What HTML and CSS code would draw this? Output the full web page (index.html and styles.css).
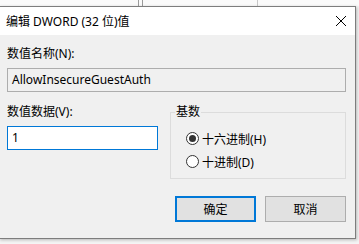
FILE: index.html
```html
<!DOCTYPE html>
<html lang="zh-CN">
<head>
<meta charset="utf-8">
<link rel="stylesheet" href="styles.css">
</head>
<body>
<div class="desk">
  <div class="behind-top">
    <span class="vline v1"></span>
    <span class="vline v2"></span>
    <span class="vline v3"></span>
  </div>
  <div class="dialog">
    <div class="titlebar">
      <span class="title">编辑 DWORD (32 位)值</span>
      <svg class="close" width="12" height="12" viewBox="0 0 12 12">
        <path d="M1 1 L11 11 M11 1 L1 11" stroke="#000" stroke-width="1" fill="none"/>
      </svg>
    </div>
    <div class="body">
      <div class="label first">数值名称(N):</div>
      <div class="field readonly">AllowInsecureGuestAuth</div>
      <div class="row">
        <div class="col-left">
          <div class="label">数值数据(V):</div>
          <div class="field value">1</div>
        </div>
        <fieldset class="group">
          <legend>基数</legend>
          <div class="radio"><span class="dot checked"></span><span>十六进制(H)</span></div>
          <div class="radio"><span class="dot"></span><span>十进制(D)</span></div>
        </fieldset>
      </div>
      <div class="buttons">
        <div class="btn default">确定</div>
        <div class="btn">取消</div>
      </div>
    </div>
  </div>
</div>
</body>
</html>
```
FILE: styles.css
```css
* { box-sizing: border-box; }
html, body { margin: 0; padding: 0; }
body {
  width: 359px;
  height: 244px;
  overflow: hidden;
  font-family: "Noto Sans", "Noto Sans CJK SC", sans-serif;
  font-size: 12px;
  color: #000;
}
.desk {
  position: relative;
  width: 359px;
  height: 244px;
  background: #f4f4f4;
  overflow: hidden;
}
.behind-top {
  height: 6px;
  background: #fafafa;
  position: relative;
}
.vline {
  position: absolute;
  top: 0;
  width: 1px;
  height: 6px;
  background: #9a9a9a;
}
.v1 { left: 138px; }
.v2 { left: 142px; }
.v3 { left: 257px; background: #c8c8c8; }
.dialog {
  position: absolute;
  left: -1px;
  top: 6px;
  width: 357px;
  height: 233px;
  border: 1px solid #7d7d7d;
  background: #f0f0f0;
  box-shadow: 1px 1px 3px rgba(0,0,0,0.25);
  display: flex;
  flex-direction: column;
}
.titlebar {
  height: 28px;
  background: #fff;
  display: flex;
  align-items: center;
  justify-content: space-between;
  padding: 0 8px 0 6px;
}
.title {
  font-size: 12px;
  line-height: 16px;
  margin-top: 1px;
}
.close { display: block; margin-top: -1px; }
.body {
  flex: 1;
  padding: 11px 9px 0 7px;
  display: flex;
  flex-direction: column;
}
.label {
  line-height: 16px;
  height: 16px;
  white-space: nowrap;
}
.field {
  margin-top: 6px;
  height: 24px;
  border: 1px solid #adadad;
  line-height: 22px;
  padding-left: 4px;
  white-space: nowrap;
}
.readonly { background: #f0f0f0; }
.value {
  background: #fff;
  border-color: #0078d7;
  width: 151px;
}
.row {
  margin-top: 12px;
  display: flex;
  justify-content: space-between;
}
.col-left { display: flex; flex-direction: column; }
.group {
  margin: 0;
  width: 176px;
  height: 75px;
  border: 1px solid #dcdcdc;
  padding: 7px 0 0 4px;
}
.group legend {
  padding: 0 1px;
  margin-left: 0;
  line-height: 16px;
}
.radio {
  display: flex;
  align-items: center;
  height: 23px;
  gap: 3px;
  margin-left: 11px;
  white-space: nowrap;
}
.dot {
  width: 13px;
  height: 13px;
  border-radius: 50%;
  border: 1px solid #333;
  background: #fff;
  display: flex;
  align-items: center;
  justify-content: center;
}
.dot.checked::after {
  content: "";
  width: 7px;
  height: 7px;
  border-radius: 50%;
  background: #333;
}
.buttons {
  margin-top: 17px;
  display: flex;
  justify-content: flex-end;
  gap: 9px;
}
.btn {
  width: 81px;
  height: 26px;
  background: #e1e1e1;
  border: 1px solid #adadad;
  display: flex;
  align-items: center;
  justify-content: center;
}
.btn.default {
  border: 2px solid #0078d7;
}
```
